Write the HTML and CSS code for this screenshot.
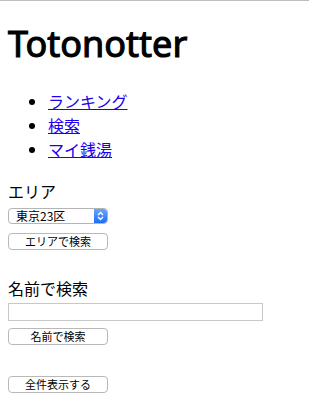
FILE: index.html
```html
<!DOCTYPE html>
<html lang="ja">
<head>
<meta charset="utf-8">
<title>Totonotter</title>
<link rel="stylesheet" href="styles.css">
</head>
<body>
<div class="topline"></div>
<div class="page">
  <h1 class="title">Totonotter</h1>
  <ul class="nav">
    <li><a href="#">ランキング</a></li>
    <li><a href="#">検索</a></li>
    <li><a href="#">マイ銭湯</a></li>
  </ul>
  <form class="form area-form">
    <div class="label">エリア</div>
    <div class="select-wrap">
      <select class="select"><option>東京23区</option></select>
      <span class="stepper"><svg width="7" height="10" viewBox="0 0 7 10"><path d="M1 4 L3.5 1.5 L6 4 M1 6 L3.5 8.5 L6 6" fill="none" stroke="#fff" stroke-width="1.3"/></svg></span>
    </div>
    <button type="button" class="btn btn-area">エリアで検索</button>
  </form>
  <form class="form name-form">
    <div class="label">名前で検索</div>
    <input class="text-input" type="text">
    <button type="button" class="btn btn-name">名前で検索</button>
  </form>
  <button type="button" class="btn btn-all">全件表示する</button>
</div>
</body>
</html>
```
FILE: styles.css
```css
html, body {
  margin: 0;
  padding: 0;
  background: #fff;
}
body {
  font-family: "Noto Sans CJK JP", "Noto Sans", sans-serif;
  color: #000;
}
.topline {
  height: 1px;
  background: #bdbdbd;
}
.page {
  padding: 0 8px;
  display: flex;
  flex-direction: column;
  align-items: flex-start;
}
.title {
  font-family: "Noto Sans", sans-serif;
  font-size: 36px;
  font-weight: 400;
  -webkit-text-stroke: 1.1px #000;
  line-height: 40px;
  margin: 23px 0 25px;
}
.nav {
  margin: 0;
  padding-left: 40px;
  font-size: 16px;
  line-height: 24px;
}
.nav a {
  color: #2200ee;
  text-decoration: underline;
}
.form {
  display: flex;
  flex-direction: column;
  align-items: flex-start;
  margin: 0;
}
.area-form {
  margin-top: 18px;
}
.name-form {
  margin-top: 26px;
}
.label {
  font-size: 16px;
  line-height: 24px;
}
.select-wrap {
  display: flex;
  width: 100px;
  height: 16px;
  margin-top: 5px;
  border: 1px solid #b4b4b4;
  border-radius: 4px;
  box-sizing: border-box;
  overflow: hidden;
  background: #fff;
}
.select {
  flex: 1;
  appearance: none;
  -webkit-appearance: none;
  border: 0;
  margin: 0;
  padding: 0 0 0 7px;
  background: transparent;
  font-family: "Noto Sans CJK JP", sans-serif;
  font-size: 12px;
  line-height: 14px;
  height: 14px;
  color: #000;
}
.stepper {
  width: 13px;
  display: flex;
  align-items: center;
  justify-content: center;
  background: linear-gradient(#6aa6ff, #1c6ef5);
  border-radius: 0 3px 3px 0;
}
.btn {
  width: 100px;
  height: 17px;
  padding: 0;
  border: 1px solid #b8b8b8;
  border-radius: 4px;
  background: #fff;
  font-family: "Noto Sans CJK JP", sans-serif;
  font-size: 11px;
  line-height: 15px;
  color: #000;
  box-sizing: border-box;
}
.btn-area {
  margin-top: 9px;
}
.text-input {
  width: 255px;
  height: 18px;
  margin: 3px 0 0;
  padding: 0 2px;
  border: 1px solid #c8c8c8;
  border-radius: 0;
  box-sizing: border-box;
  font-size: 12px;
}
.btn-name {
  margin-top: 7px;
}
.btn-all {
  margin-top: 31px;
}
```
